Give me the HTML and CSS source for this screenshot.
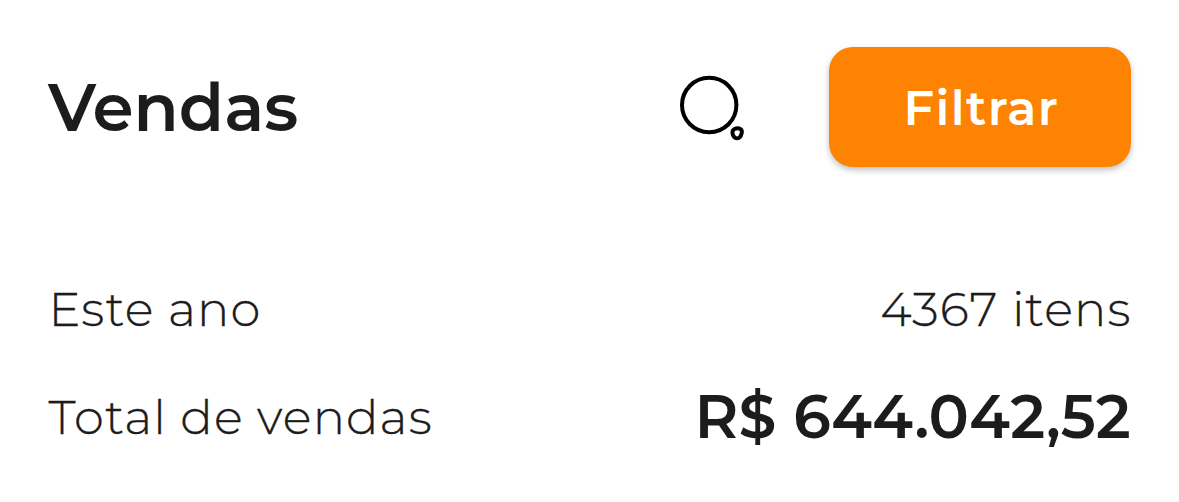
FILE: index.html
```html
<!DOCTYPE html>
<html lang="pt-BR">
<head>
<meta charset="utf-8">
<title>Vendas</title>
<link rel="stylesheet" href="styles.css">
</head>
<body>
<main class="sales">
  <header class="header">
    <h1 class="title">Vendas</h1>
    <button class="search" aria-label="Buscar">
      <svg class="search-icon" viewBox="0 0 72 72" fill="none" stroke="#000" stroke-width="4">
        <circle cx="31.200" cy="34" r="27.200"/>
        <path d="M56.500 58C58.500 57.200 61 57.200 62.700 58.200C65 59.600 63.400 64.800 61.700 66.400C60.300 67.700 57.700 67.500 56.200 66C54.300 64.200 53.400 59.400 56.500 58Z" stroke-linejoin="round"/>
      </svg>
    </button>
    <button class="filter">Filtrar</button>
  </header>
  <section class="row row-period">
    <span class="label">Este ano</span>
    <span class="label label-end">4367 itens</span>
  </section>
  <section class="row row-total">
    <span class="label">Total de vendas</span>
    <strong class="amount">R$ 644.042,52</strong>
  </section>
</main>
</body>
</html>
```
FILE: styles.css
```css
* { box-sizing: border-box; }
body { margin: 0; background: #fff; color: #1c1c1c; font-family: Montserrat, Inter, sans-serif; }
.sales { width: 1179px; height: 502px; padding: 47px 48px 0 48px; }
.header { display: flex; align-items: center; height: 120px; }
.title { flex: 1; margin: 0; padding-top: 2px; font-size: 66px; font-weight: 600; line-height: 80px; }
.search { width: 72px; height: 72px; margin: 0 79px 0 0; padding: 0; border: 0; background: none; }
.search-icon { display: block; width: 72px; height: 72px; }
.filter { width: 302px; height: 120px; padding: 2px 0 0 3px; border: 0; border-radius: 24px; background: #ff8303; color: #fff; font: 600 48px Montserrat, Inter, sans-serif; letter-spacing: 1.4px; box-shadow: 0 3px 6px rgba(0,0,0,.25); }
.row { display: flex; justify-content: space-between; align-items: center; white-space: nowrap; }
.row-period { height: 60px; margin-top: 112px; }
.row-total { height: 80px; margin-top: 38px; }
.label { padding-left: .5px; font-size: 48px; font-weight: 300; letter-spacing: 1.12px; -webkit-text-stroke: .3px #1c1c1c; }
.label-end { margin-right: -.5px; }
.amount { padding-bottom: 1px; font-size: 60px; font-weight: 600; letter-spacing: .25px; }
```
